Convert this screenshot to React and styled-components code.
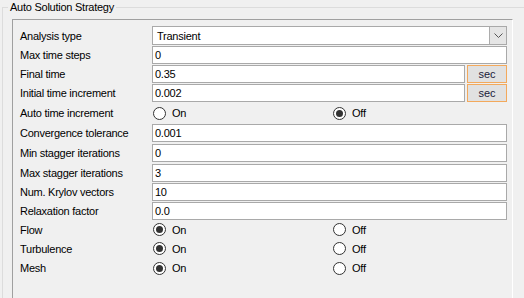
import styled, { createGlobalStyle } from "styled-components";

const Global = createGlobalStyle`
  html, body {
    margin: 0;
    padding: 0;
    background: #f0f0f0;
    width: 524px;
    height: 298px;
    overflow: hidden;
  }
  body {
    font-family: "Liberation Sans", Arial, sans-serif;
    font-size: 11px;
    letter-spacing: -0.25px;
    color: #000;
  }
`;

const rows = [
  { label: "Analysis type", kind: "combo", value: "Transient", h: 19 },
  { label: "Max time steps", kind: "text", value: "0", h: 19 },
  { label: "Final time", kind: "unit", value: "0.35", h: 19 },
  { label: "Initial time increment", kind: "unit", value: "0.002", h: 20 },
  { label: "Auto time increment", kind: "radio", on: false, h: 20 },
  { label: "Convergence tolerance", kind: "text", value: "0.001", h: 20 },
  { label: "Min stagger iterations", kind: "text", value: "0", h: 20 },
  { label: "Max stagger iterations", kind: "text", value: "3", h: 19 },
  { label: "Num. Krylov vectors", kind: "text", value: "10", h: 19 },
  { label: "Relaxation factor", kind: "text", value: "0.0", h: 19 },
  { label: "Flow", kind: "radio", on: true, h: 19 },
  { label: "Turbulence", kind: "radio", on: true, h: 19 },
  { label: "Mesh", kind: "radio", on: true, h: 20 },
];

const App = () => {
  return (
    <>
      <Global />
      <GroupBox>
        <Legend>Auto Solution Strategy</Legend>
        <Panel>
          {rows.map((r) => (
            <Row key={r.label} $h={r.h}>
              <Label>{r.label}</Label>
              {r.kind === "combo" && (
                <Combo>
                  <span>{r.value}</span>
                  <DropButton>
                    <svg width="9" height="6" viewBox="0 0 9 6">
                      <path d="M0.5 0.5 L4.5 4.5 L8.5 0.5" fill="none" stroke="#555" strokeWidth="1" />
                    </svg>
                  </DropButton>
                </Combo>
              )}
              {r.kind === "text" && <TextBox>{r.value}</TextBox>}
              {r.kind === "unit" && (
                <UnitLine>
                  <TextBox>{r.value}</TextBox>
                  <SecButton>sec</SecButton>
                </UnitLine>
              )}
              {r.kind === "radio" && (
                <RadioLine>
                  <Choice>
                    <Radio $checked={r.on} />
                    On
                  </Choice>
                  <Choice>
                    <Radio $checked={!r.on} />
                    Off
                  </Choice>
                </RadioLine>
              )}
            </Row>
          ))}
        </Panel>
      </GroupBox>
    </>
  );
};

export default App;

const GroupBox = styled.div`
  position: relative;
  margin: 7px 0 0 2px;
  width: 522px;
  height: 291px;
  border-top: 1px solid #dcdcdc;
  border-left: 1px solid #dcdcdc;
  padding: 11px 0 0 9px;
  box-sizing: border-box;
`;

const Legend = styled.div`
  position: absolute;
  top: -8px;
  left: 5px;
  padding: 0 2px;
  background: #f0f0f0;
  line-height: 14px;
`;

const Panel = styled.div`
  width: 501px;
  height: 279px;
  box-sizing: border-box;
  border-top: 1px solid #a0a0a0;
  border-left: 1px solid #a0a0a0;
  border-right: 1px solid #ffffff;
  padding: 6px 5px 0 7px;
  display: flex;
  flex-direction: column;
`;

const Row = styled.div`
  height: ${(p) => p.$h}px;
  flex-shrink: 0;
  display: grid;
  grid-template-columns: 132px 1fr;
  align-items: center;
`;

const Label = styled.div`
  white-space: nowrap;
`;

const Box = styled.div`
  height: 18px;
  box-sizing: border-box;
  background: #fff;
  border: 1px solid #a9a9a9;
  display: flex;
  align-items: center;
`;

const TextBox = styled(Box)`
  flex: 1;
  padding-left: 2px;
`;

const Combo = styled(Box)`
  height: 19px;
  padding-left: 4px;
  justify-content: space-between;
`;

const DropButton = styled.div`
  width: 17px;
  height: 17px;
  box-sizing: border-box;
  background: #e5e5e5;
  border-left: 1px solid #acacac;
  display: flex;
  align-items: center;
  justify-content: center;
`;

const UnitLine = styled.div`
  display: flex;
  gap: 2px;
`;

const SecButton = styled.div`
  width: 40px;
  height: 18px;
  box-sizing: border-box;
  background: #e1e1e1;
  border: 1px solid #f3a95c;
  color: #1a1a3a;
  display: flex;
  align-items: center;
  justify-content: center;
  letter-spacing: 0;
`;

const RadioLine = styled.div`
  display: grid;
  grid-template-columns: 180px 1fr;
  padding-left: 1px;
`;

const Choice = styled.div`
  display: flex;
  align-items: center;
  gap: 6px;
`;

const Radio = styled.span`
  width: 13px;
  height: 13px;
  box-sizing: border-box;
  border-radius: 50%;
  border: 1px solid #333;
  background: #fff;
  display: flex;
  align-items: center;
  justify-content: center;
  &::after {
    content: "";
    width: 7px;
    height: 7px;
    border-radius: 50%;
    background: #333;
    display: ${(p) => (p.$checked ? "block" : "none")};
  }
`;
